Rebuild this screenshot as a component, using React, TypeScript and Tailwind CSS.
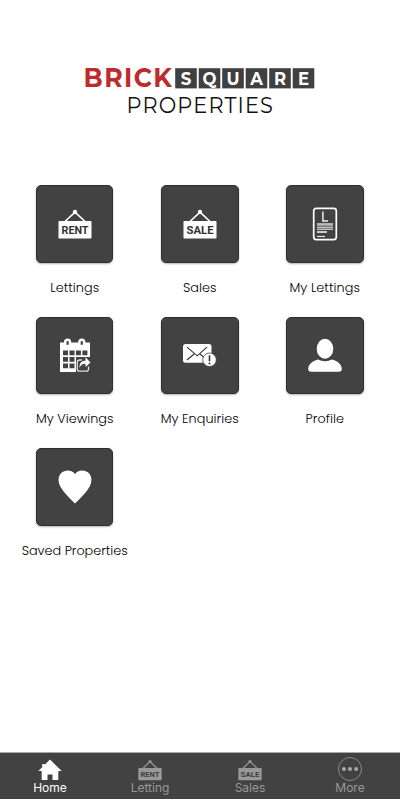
import React from "react";

function SaleSign({ text, className, fill, ink }: { text: string; className: string; fill: string; ink: string }) {
  return (
    <svg viewBox="0 0 34 30" className={className}>
      <path d="M7 12.5 17 3.2 27 12.5" fill="none" stroke={fill} strokeWidth="1.7" />
      <circle cx="17" cy="3" r="2.2" fill={fill} />
      <rect x="0.5" y="12" width="33" height="17.5" rx="0.7" fill={fill} />
      <text x="17" y="24.8" textAnchor="middle" textLength="27" lengthAdjust="spacingAndGlyphs" fill={ink} className="font-['Roboto',sans-serif] text-[11.5px] font-bold">
        {text}
      </text>
    </svg>
  );
}

function LettingDocument() {
  return (
    <svg viewBox="0 0 26 34" className="h-[34px] w-[26px]">
      <rect x="1.7" y="1.4" width="22.6" height="31.2" rx="2.5" fill="none" stroke="#fff" strokeWidth="1.7" />
      <path d="M10.9 4.5V13.9H16" fill="none" stroke="#eee" strokeWidth="1.5" />
      <path d="M5 17.4h16" stroke="#bbb" strokeWidth="2.6" />
      <path d="M5 20.2h16M5 22.2h16M5 29.4h8" stroke="#fff" strokeWidth="1" />
      <path d="M5 25h10" stroke="#ccc" strokeWidth="2" />
    </svg>
  );
}

function Calendar() {
  return (
    <svg viewBox="0 0 32 34" className="h-[34px] w-8">
      <path fill="#fff" d="M1 4.5h4V4a3.6 3.6 0 0 1 7.2 0v.5h7V4a3.6 3.6 0 0 1 7.2 0v.5H31V20H18v14H1z" />
      <path d="M8.6 3.2V6.8M22.8 3.2V6.8" stroke="#424242" strokeWidth="2.2" />
      <path fill="#424242" d="M4 12.5h5v4.7H4zm6.5 0h5v4.7h-5zm6.4 0h5v4.7h-5zm6.5 0h5v4.7h-5zM4 19h5v4.7H4zm6.5 0h5v4.7h-5zM4 25.5h5v4.8H4zm6.5 0h5v4.8h-5zM17 19h15v15H17z" />
      <path d="M23 22h-2.4q-2.3 0-2.3 2.2v6.8q0 2.2 2.3 2.2h6.6q2.3 0 2.3-2.2v-2.5" fill="none" stroke="#ddd" strokeWidth="1.3" />
      <path fill="#fff" d="M20.5 30c-.2-5 2-7.3 6-7.3v-3.4l5 5.1-5 4.5v-3.1c-3 0-5 1.1-6 4.2z" />
    </svg>
  );
}

function Envelope() {
  return (
    <svg viewBox="0 0 35 24" className="h-6 w-[35px]">
      <rect x="1" y="1" width="28.5" height="18.8" rx="2.5" fill="#fff" />
      <path d="M5 4.2 15.2 12.8 25 4.2M5 17l7.2-6M25 17l-7-6" fill="none" stroke="#333" strokeWidth="1.1" />
      <circle cx="27.5" cy="16.8" r="6.8" fill="#fff" stroke="#424242" strokeWidth="0.8" />
      <path d="M27.5 12.3v6" stroke="#333" strokeWidth="1.6" />
      <circle cx="27.5" cy="20.6" r="1" fill="#333" />
    </svg>
  );
}

function Person() {
  return (
    <svg viewBox="0 0 34 34" className="h-[34px] w-[34px]" fill="#fff">
      <ellipse cx="17" cy="10.8" rx="8.3" ry="10" />
      <path d="M10 21.6q7 3.4 14 0c5.5 1.4 9.5 4.7 9.8 9.1q.1 3-3 3H3.2q-3.1 0-3-3c.3-4.4 4.3-7.7 9.8-9.1z" />
    </svg>
  );
}

function Heart() {
  return (
    <svg viewBox="0 0 34 34" className="h-[34px] w-[34px]">
      <path fill="#fff" d="M17 4.2C14.2-.7 6.8-.7 3 3.2-.3 6.8 0 12.5 2.6 17 5.5 22.2 11 27.6 17 33.5c6-5.9 11.5-11.3 14.4-16.5C34 12.5 34.3 6.8 31 3.2 27.2-.7 19.8-.7 17 4.2z" />
    </svg>
  );
}

const tiles = [
  { label: "Lettings", icon: <SaleSign text="RENT" className="h-[30px] w-[34px]" fill="#fff" ink="#333" />, width: 49 },
  { label: "Sales", icon: <SaleSign text="SALE" className="h-[30px] w-[34px]" fill="#fff" ink="#333" />, width: 33.5 },
  { label: "My Lettings", icon: <LettingDocument />, width: 70.5 },
  { label: "My Viewings", icon: <Calendar />, width: 77.5 },
  { label: "My Enquiries", icon: <Envelope />, width: 78 },
  { label: "Profile", icon: <Person />, width: 38.5 },
  { label: "Saved Properties", icon: <Heart />, width: 106 },
];

function Logo() {
  return (
    <svg viewBox="0 0 240 60" className="mx-auto block h-[60px] w-60" role="img" aria-label="Brick Square Properties">
      <text transform="translate(3.6 27.4) scale(0.93 1)" textLength="95" lengthAdjust="spacing" fill="#be2b2d" className="font-['Montserrat','Inter',sans-serif] text-[27px] font-bold">
        BRICK
      </text>
      {"SQUARE".split("").map((letter, i) => (
        <g key={i}>
          <rect x={95.2 + i * 23.5} y="8.2" width="21.6" height="20.2" fill="#404040" />
          <text transform={`translate(${106 + i * 23.5} 24.5) scale(0.92 1)`} textAnchor="middle" fill="#fff" className="font-['Montserrat','Inter',sans-serif] text-[18px] font-bold">
            {letter}
          </text>
        </g>
      ))}
      <text transform="translate(46.6 53) scale(0.95 1)" textLength="154" lengthAdjust="spacing" fill="#111" className="font-['Montserrat','Lato',sans-serif] text-[22px]">
        PROPERTIES
      </text>
    </svg>
  );
}

function HomeIcon() {
  return (
    <svg viewBox="0 0 24 22" className="h-[22px] w-6">
      <path fill="#fff" d="M12 .6 23.7 12H20.3v9H14.5v-5.4h-5V21H3.7v-9H.3L4.2 8.2V5h2.6v.7z" />
    </svg>
  );
}

function MoreIcon() {
  return (
    <svg viewBox="0 0 24 24" className="h-6 w-6">
      <circle cx="12" cy="12" r="11.5" fill="none" stroke="#999" strokeWidth="0.8" />
      <g fill="#aaa">
        <circle cx="5.9" cy="12" r="2" />
        <circle cx="12" cy="12" r="2" />
        <circle cx="18.1" cy="12" r="2" />
      </g>
    </svg>
  );
}

const tabs = [
  { label: "Home", icon: <HomeIcon />, color: "text-white" },
  { label: "Letting", icon: <SaleSign text="RENT" className="h-[22px] w-6" fill="#999" ink="#3d3d3d" />, color: "text-[#999]" },
  { label: "Sales", icon: <SaleSign text="SALE" className="h-[22px] w-6" fill="#999" ink="#3d3d3d" />, color: "text-[#999]" },
  { label: "More", icon: <MoreIcon />, color: "text-[#999]" },
];

export default function App() {
  return (
    <div className="flex h-[800px] w-[400px] flex-col overflow-hidden bg-white">
      <header className="pt-[60px]">
        <Logo />
      </header>
      <main className="mt-[65px] grid flex-1 auto-rows-[131.7px] grid-cols-[125.3px_125.3px_125.3px] content-start pl-[11.9px]">
        {tiles.map((tile) => (
          <div key={tile.label} className="flex flex-col items-center">
            <div className="flex h-[77.5px] w-[77.5px] items-center justify-center rounded-[5px] border border-[#303030] bg-[#424242] shadow-[0_1px_2px_rgba(0,0,0,0.3)]">
              {tile.icon}
            </div>
            <svg className="mt-[14px] h-6 w-[120px]" viewBox="0 0 120 24">
              <text x={59.7 - tile.width / 2} y="14.9" textLength={tile.width} lengthAdjust="spacing" fill="#000" className="font-['Poppins','Inter',sans-serif] text-[12.8px] font-light">
                {tile.label}
              </text>
            </svg>
          </div>
        ))}
      </main>
      <nav className="mb-px grid h-[47px] shrink-0 grid-cols-4 border-t border-[#aaa] bg-[#424242]">
        {tabs.map((tab) => (
          <div key={tab.label} className={`flex flex-col items-center ${tab.color}`}>
            <div className="flex h-[28px] items-end justify-center">{tab.icon}</div>
            <span className="font-['Inter',sans-serif] text-[12px] leading-[14px]">{tab.label}</span>
          </div>
        ))}
      </nav>
    </div>
  );
}
